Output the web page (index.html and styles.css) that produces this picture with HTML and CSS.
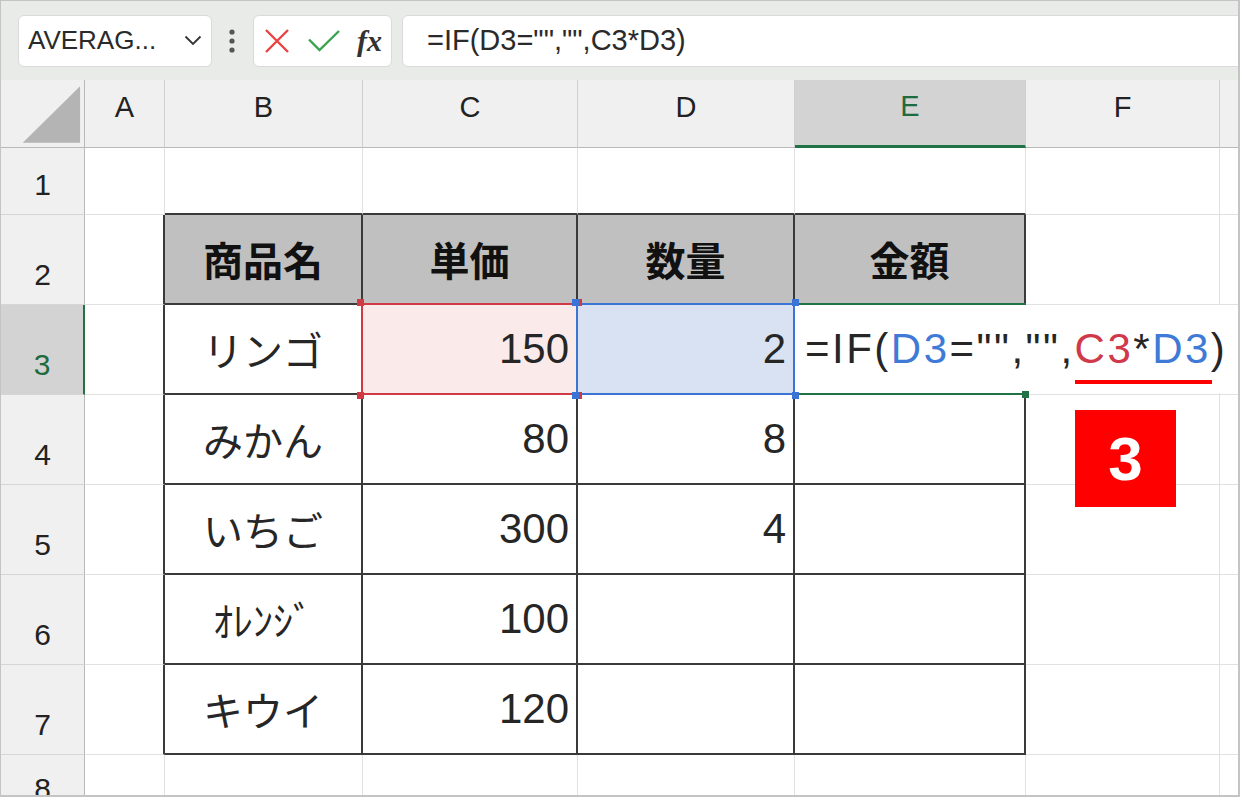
FILE: index.html
```html
<!DOCTYPE html>
<html lang="ja">
<head>
  <meta charset="UTF-8" />
  <title>IF関数 - 空白なら空白</title>
  <link rel="stylesheet" href="styles.css">
</head>
<body>
  <div class="frame">
    <div class="toolbar">
      <div class="namebox">
        <span>AVERAG...</span>
        <svg width="18" height="11" viewBox="0 0 18 11"><path d="M1.5 1.5l7.5 7.5 7.5-7.5" fill="none" stroke="#333" stroke-width="1.8"/></svg>
      </div>
      <svg class="dots" width="6" height="24" viewBox="0 0 6 24"><circle cx="3" cy="3" r="2.6" fill="#555"/><circle cx="3" cy="12" r="2.6" fill="#555"/><circle cx="3" cy="21" r="2.6" fill="#555"/></svg>
      <div class="fxbox">
        <svg width="24" height="24" viewBox="0 0 24 24"><path d="M1 1l22 22M23 1L1 23" stroke="#e9443f" stroke-width="2.4"/></svg>
        <svg width="32" height="22" viewBox="0 0 32 22"><path d="M1 9.5l10.5 10.5L31 1" fill="none" stroke="#3aa452" stroke-width="2.4"/></svg>
        <span class="fx">fx</span>
      </div>
      <div class="formula">=IF(D3="","",C3*D3)</div>
    </div>

    <div class="sheet">
      <!-- column headers -->
      <div class="ch corner">
        <svg width="84" height="67" viewBox="0 0 84 67"><polygon points="22,63 80,63 80,6" fill="#b4b4b4"/></svg>
      </div>
      <div class="ch">A</div>
      <div class="ch">B</div>
      <div class="ch">C</div>
      <div class="ch">D</div>
      <div class="ch sel">E</div>
      <div class="ch">F</div>
      <div class="ch"></div>

      <!-- row 1 -->
      <div class="rh">1</div>
      <div class="cell"></div>
      <div class="cell tt"></div>
      <div class="cell tt"></div>
      <div class="cell tt"></div>
      <div class="cell tt"></div>
      <div class="cell"></div>
      <div class="cell"></div>

      <!-- row 2 -->
      <div class="rh">2</div>
      <div class="cell tl"></div>
      <div class="cell t th">商品名</div>
      <div class="cell t th">単価</div>
      <div class="cell t th">数量</div>
      <div class="cell t th">金額</div>
      <div class="cell"></div>
      <div class="cell"></div>

      <!-- row 3 -->
      <div class="rh sel">3</div>
      <div class="cell tl"></div>
      <div class="cell t name">リンゴ</div>
      <div class="cell t num ref ref-red">150</div>
      <div class="cell t num ref ref-blue">2</div>
      <div class="cell t active">
        <span class="overflow">=IF(<span class="c-blue">D3</span>="","",<span class="c-red">C3</span>*<span class="c-blue">D3</span>)</span>
        <span class="mark-line"></span>
        <span class="mark-box">3</span>
      </div>
      <div class="cell"></div>
      <div class="cell"></div>

      <!-- row 4 -->
      <div class="rh">4</div>
      <div class="cell tl"></div>
      <div class="cell t name">みかん</div>
      <div class="cell t num">80</div>
      <div class="cell t num">8</div>
      <div class="cell t"></div>
      <div class="cell"></div>
      <div class="cell"></div>

      <!-- row 5 -->
      <div class="rh">5</div>
      <div class="cell tl"></div>
      <div class="cell t name">いちご</div>
      <div class="cell t num">300</div>
      <div class="cell t num">4</div>
      <div class="cell t"></div>
      <div class="cell"></div>
      <div class="cell"></div>

      <!-- row 6 -->
      <div class="rh">6</div>
      <div class="cell tl"></div>
      <div class="cell t name">ｵﾚﾝｼﾞ</div>
      <div class="cell t num">100</div>
      <div class="cell t num"></div>
      <div class="cell t"></div>
      <div class="cell"></div>
      <div class="cell"></div>

      <!-- row 7 -->
      <div class="rh">7</div>
      <div class="cell tl"></div>
      <div class="cell t name">キウイ</div>
      <div class="cell t num">120</div>
      <div class="cell t num"></div>
      <div class="cell t"></div>
      <div class="cell"></div>
      <div class="cell"></div>

      <!-- row 8 -->
      <div class="rh last">8</div>
      <div class="cell"></div>
      <div class="cell"></div>
      <div class="cell"></div>
      <div class="cell"></div>
      <div class="cell"></div>
      <div class="cell"></div>
      <div class="cell"></div>
    </div>
  </div>
</body>
</html>
```

FILE: styles.css
```css
* {
  box-sizing: border-box;
}

body {
  margin: 0;
  background: #fff;
  font-family: "Liberation Sans", "Noto Sans CJK JP", sans-serif;
  color: #222;
}

.frame {
  width: 1240px;
  height: 797px;
  border: 1px solid #c4c4c4;
  border-right-width: 2px;
  border-bottom-width: 2px;
  overflow: hidden;
}

/* formula bar */
.toolbar {
  height: 79px;
  background: #e9ebe8;
  display: flex;
  align-items: center;
  padding-left: 17px;
}

.namebox {
  width: 194px;
  height: 52px;
  background: #fff;
  border: 1px solid #dadada;
  border-radius: 6px;
  display: flex;
  align-items: center;
  justify-content: space-between;
  padding: 0 9px 0 9px;
  font-size: 26px;
  color: #2a2a2a;
}

.dots {
  margin-left: 17px;
}

.fxbox {
  margin-left: 18px;
  width: 139px;
  height: 52px;
  background: #fff;
  border: 1px solid #dadada;
  border-radius: 6px;
  display: flex;
  align-items: center;
  padding-left: 11px;
  gap: 19px;
}

.fx {
  font-family: "Liberation Serif", serif;
  font-style: italic;
  font-weight: bold;
  font-size: 30px;
  color: #333;
  margin-left: -2px;
}

.formula {
  flex: 1;
  margin-left: 10px;
  margin-right: -12px;
  height: 52px;
  background: #fff;
  border: 1px solid #dadada;
  border-radius: 6px;
  display: flex;
  align-items: center;
  padding-left: 24px;
  font-size: 29px;
  color: #2a2a2a;
}

/* grid */
.sheet {
  display: grid;
  grid-template-columns: 84px 80px 198px 215px 217px 231px 194px 194px;
  grid-template-rows: 68px 67px repeat(6, 90px) 50px;
}

.ch {
  background: #f0f0f0;
  border-right: 1px solid #cfcfcf;
  border-bottom: 1px solid #b9b9b9;
  display: flex;
  align-items: center;
  justify-content: center;
  padding-bottom: 12px;
  font-size: 29px;
}

.ch.corner {
  padding: 0;
  align-items: stretch;
  justify-content: stretch;
  border-right-color: #b9b9b9;
}

.ch.sel {
  background: #d3d3d3;
  border-bottom: 3px solid #217346;
  color: #1e6b3f;
}

.rh {
  background: #f0f0f0;
  border-right: 1px solid #b9b9b9;
  border-bottom: 1px solid #d6d6d6;
  display: flex;
  align-items: flex-end;
  justify-content: center;
  padding-bottom: 14px;
  font-size: 30px;
  line-height: 1;
}

.rh.last {
  padding-bottom: 0;
}

.rh.sel {
  background: #d3d3d3;
  border-right: 2px solid #217346;
  color: #1e6b3f;
}

.cell {
  border-right: 1px solid #e1e1e1;
  border-bottom: 1px solid #e1e1e1;
  display: flex;
  align-items: center;
  background: #fff;
}

.cell.tt {
  border-bottom: 2px solid #3a3a3a;
}

.cell.tl {
  border-right: 2px solid #3a3a3a;
}

.cell.t {
  border-right: 2px solid #3a3a3a;
  border-bottom: 2px solid #3a3a3a;
}

.th {
  background: #c0c0c0;
  justify-content: center;
  font-family: "Noto Sans CJK JP", sans-serif;
  font-weight: bold;
  font-size: 40px;
  color: #111;
}

.name {
  justify-content: center;
  font-family: "Noto Sans CJK JP", sans-serif;
  font-size: 40px;
  color: #262626;
}

.num {
  justify-content: flex-end;
  padding-right: 7px;
  font-size: 42px;
  color: #262626;
}

/* reference highlights */
.ref {
  position: relative;
}

.ref::before {
  content: "";
  position: absolute;
  top: -2px;
  left: -2px;
  right: -2px;
  bottom: -2px;
  border: 2px solid;
}

.ref::after {
  content: "";
  position: absolute;
  top: -6px;
  left: -6px;
  right: -6px;
  bottom: -6px;
  z-index: 3;
  background-size: 7px 7px;
  background-repeat: no-repeat;
  background-position: left top, right top, left bottom, right bottom;
}

.ref-red {
  background: #fbeaea;
}

.ref-red::before {
  border-color: #cf3a44;
}

.ref-red::after {
  background-image: linear-gradient(#cf3a44, #cf3a44), linear-gradient(#cf3a44, #cf3a44), linear-gradient(#cf3a44, #cf3a44), linear-gradient(#cf3a44, #cf3a44);
}

.ref-blue {
  background: #d9e2f3;
}

.ref-blue::before {
  border-color: #3a74d4;
  z-index: 2;
}

.ref-blue::after {
  background-image: linear-gradient(#3a74d4, #3a74d4), linear-gradient(#3a74d4, #3a74d4), linear-gradient(#3a74d4, #3a74d4), linear-gradient(#3a74d4, #3a74d4);
}

.active {
  position: relative;
}

.active::before {
  content: "";
  position: absolute;
  top: -2px;
  left: 0;
  right: -2px;
  bottom: -2px;
  border-top: 2px solid #217346;
  border-bottom: 2px solid #217346;
  z-index: 2;
}

.active::after {
  content: "";
  position: absolute;
  right: -5px;
  bottom: -5px;
  width: 7px;
  height: 7px;
  background: #217346;
  z-index: 3;
}

.overflow {
  position: absolute;
  left: 0;
  top: 0;
  width: 443px;
  height: 88px;
  background: #fff;
  z-index: 1;
  display: flex;
  align-items: center;
  padding-left: 10px;
  white-space: nowrap;
  font-size: 42px;
  letter-spacing: 2.5px;
  color: #262626;
}

.c-blue {
  color: #3f7ad6;
}

.c-red {
  color: #d0394a;
}

/* annotation */
.mark-line {
  position: absolute;
  left: 280px;
  top: 75px;
  width: 137px;
  height: 4px;
  background: #ff0000;
  z-index: 2;
}

.mark-box {
  position: absolute;
  left: 280px;
  top: 105px;
  width: 101px;
  height: 97px;
  background: #ff0000;
  color: #fff;
  z-index: 2;
  display: flex;
  align-items: center;
  justify-content: center;
  font-weight: bold;
  font-size: 62px;
}
```
